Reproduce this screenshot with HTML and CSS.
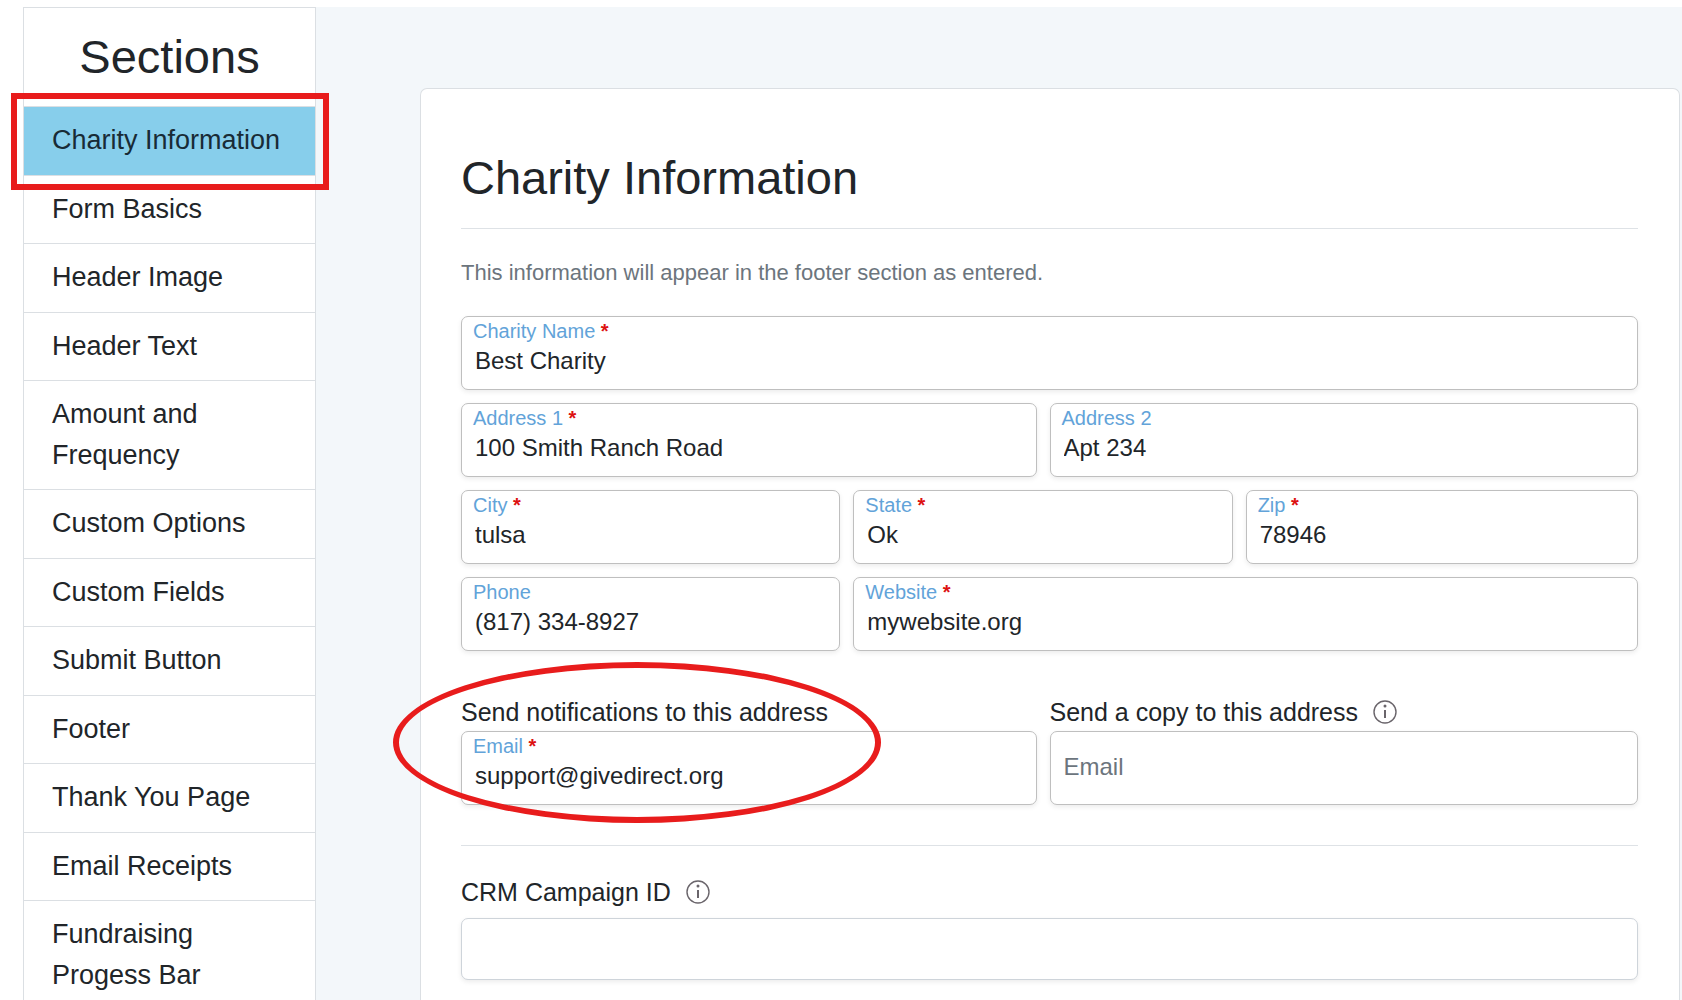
FILE: index.html
```html
<!DOCTYPE html>
<html lang="en">

<head>
  <meta charset="UTF-8">
  <meta name="viewport" content="width=device-width, initial-scale=1">
  <title>Charity Information</title>
  <link rel="stylesheet" href="styles.css">
</head>

<body>
  <div class="page">

    <!-- sections menu -->
    <nav class="sidebar">
      <h2 class="sidebar-title">Sections</h2>
      <a class="section active" href="#charity">Charity Information<span class="mark mark-box"></span></a>
      <a class="section" href="#basics">Form Basics</a>
      <a class="section" href="#header-image">Header Image</a>
      <a class="section" href="#header-text">Header Text</a>
      <a class="section" href="#amount">Amount and Frequency</a>
      <a class="section" href="#options">Custom Options</a>
      <a class="section" href="#fields">Custom Fields</a>
      <a class="section" href="#submit">Submit Button</a>
      <a class="section" href="#footer">Footer</a>
      <a class="section" href="#thanks">Thank You Page</a>
      <a class="section" href="#receipts">Email Receipts</a>
      <a class="section" href="#progress">Fundraising Progess Bar</a>
    </nav>

    <main class="content">
      <form class="card" id="charity">
        <h1>Charity Information</h1>
        <hr>
        <p class="hint">This information will appear in the footer section as entered.</p>

        <div class="rows">
          <div class="field full">
            <label for="name">Charity Name <b>*</b></label>
            <input type="text" id="name" value="Best Charity" required>
          </div>

          <div class="field half">
            <label for="address1">Address 1 <b>*</b></label>
            <input type="text" id="address1" value="100 Smith Ranch Road" required>
          </div>
          <div class="field half last">
            <label for="address2">Address 2</label>
            <input type="text" id="address2" value="Apt 234">
          </div>

          <div class="field third">
            <label for="city">City <b>*</b></label>
            <input type="text" id="city" value="tulsa" required>
          </div>
          <div class="field third">
            <label for="state">State <b>*</b></label>
            <input type="text" id="state" value="Ok" required>
          </div>
          <div class="field third last">
            <label for="zip">Zip <b>*</b></label>
            <input type="text" id="zip" value="78946" required>
          </div>

          <div class="field third">
            <label for="phone">Phone</label>
            <input type="tel" id="phone" value="(817) 334-8927">
          </div>
          <div class="field two-thirds last">
            <label for="website">Website <b>*</b></label>
            <input type="text" id="website" value="mywebsite.org" required>
          </div>
        </div>

        <!-- notification addresses -->
        <div class="rows emails">
          <div class="half group">
            <div class="group-label">Send notifications to this address</div>
            <div class="field">
              <label for="email">Email <b>*</b></label>
              <input type="email" id="email" value="support@givedirect.org" required>
            </div>
            <span class="mark mark-oval"></span>
          </div>
          <div class="half last">
            <label class="group-label" for="copy">Send a copy to this address
              <svg class="info" viewBox="0 0 24 24" aria-hidden="true">
                <circle cx="12" cy="12" r="11"/>
                <path d="M12 10v8"/>
                <circle class="dot" cx="12" cy="6" r="1.5"/>
              </svg>
            </label>
            <div class="field empty">
              <input type="email" id="copy" placeholder="Email">
            </div>
          </div>
        </div>

        <hr>

        <label class="group-label crm-label" for="crm">CRM Campaign ID
          <svg class="info" viewBox="0 0 24 24" aria-hidden="true">
            <circle cx="12" cy="12" r="11"/>
            <path d="M12 10v8"/>
            <circle class="dot" cx="12" cy="6" r="1.5"/>
          </svg>
        </label>
        <input class="crm" type="text" id="crm">
      </form>
    </main>

  </div>
</body>

</html>
```

FILE: styles.css
```css
* {
  box-sizing: border-box;
}

body {
  margin: 0;
  background-color: white;
  color: #212529;
  font-family: "Liberation Sans", Arial, sans-serif;
}

.page {
  display: flex;
  min-height: 100vh;
  padding: 7px 0 0 23px;
}

h1,
h2 {
  margin: 0;
  font-size: 47px;
  line-height: 56px;
  font-weight: normal;
}

hr {
  margin: 0;
  border: 0;
  border-top: 1px solid #dee2e6;
}

/* SIDEBAR */
.sidebar {
  flex: 0 0 293px;
  border: 1px solid #dbdfe3;
  background-color: white;
}

.sidebar-title {
  padding: 21px 0;
  text-align: center;
}

.section {
  display: block;
  position: relative;
  padding: 13px 28px 14px;
  border-top: 1px solid #dbdfe3;
  color: #212529;
  font-size: 27px;
  line-height: 1.5;
  text-decoration: none;
}

.section.active {
  background-color: #87ceeb;
  background-clip: padding-box;
  color: #182b36;
}

/* RED MARKERS */
.mark {
  position: absolute;
  z-index: 1;
  border: 6px solid #e81c1c;
  pointer-events: none;
}

.mark-box {
  inset: -14px -14px -15px -13px;
}

.mark-oval {
  top: -35px;
  left: -68px;
  width: 488px;
  height: 161px;
  border-radius: 50%;
}

/* CONTENT */
.content {
  flex: 1;
  display: flex;
  padding: 81px 2px 0 104px;
  background-color: #f3f7fa;
}

.card {
  flex: 1;
  padding: 61px 41px 20px 40px;
  border: 1px solid #dbdfe3;
  border-bottom: 0;
  border-radius: 7px 7px 0 0;
  background-color: white;
}

.card h1 {
  margin-bottom: 22px;
}

.hint {
  margin: 27px 0;
  color: #6c757d;
  font-size: 22px;
  line-height: 33px;
}

.rows {
  display: grid;
  grid-template-columns: repeat(6, 1fr);
  row-gap: 13px;
}

.full {
  grid-column: span 6;
}

.half {
  grid-column: span 3;
  margin-right: 13px;
}

.third {
  grid-column: span 2;
  margin-right: 13px;
}

.two-thirds {
  grid-column: span 4;
}

.last {
  margin-right: 0;
}

/* FIELDS */
.field {
  display: flex;
  flex-direction: column;
  height: 74px;
  padding-top: 2px;
  border: 1px solid #bfbfbf;
  border-radius: 7px;
  background-color: white;
  box-shadow: 0 2px 5px rgba(0, 0, 0, 0.08);
}

.field label {
  padding-left: 11px;
  color: #62a3d9;
  font-size: 20px;
  line-height: 24px;
}

.field b {
  color: #dd1111;
}

.field input {
  width: 100%;
  height: 36px;
  padding: 0 13px;
  border: 0;
  outline: 0;
  background: none;
  color: #212529;
  font-family: inherit;
  font-size: 24px;
}

.field.empty {
  justify-content: center;
  padding: 0 0 2px;
}

.field input::placeholder {
  color: #6c757d;
  opacity: 1;
}

.emails {
  margin: 46px 0 40px;
}

.group {
  position: relative;
}

.group-label {
  display: flex;
  align-items: center;
  gap: 15px;
  margin-bottom: 4px;
  font-size: 25px;
  line-height: 30px;
}

.info {
  width: 24px;
  height: 24px;
  fill: none;
  stroke: #6a656b;
  stroke-width: 1.4;
}

.info path {
  stroke-width: 2;
}

.info .dot {
  fill: #6a656b;
  stroke: none;
}

.crm-label {
  margin: 31px 0 11px;
}

.crm {
  display: block;
  width: 100%;
  height: 62px;
  padding: 0 12px;
  border: 1px solid #ced4da;
  border-radius: 7px;
  background-color: white;
  box-shadow: 0 2px 5px rgba(0, 0, 0, 0.08);
  font-family: inherit;
  font-size: 24px;
}
```
